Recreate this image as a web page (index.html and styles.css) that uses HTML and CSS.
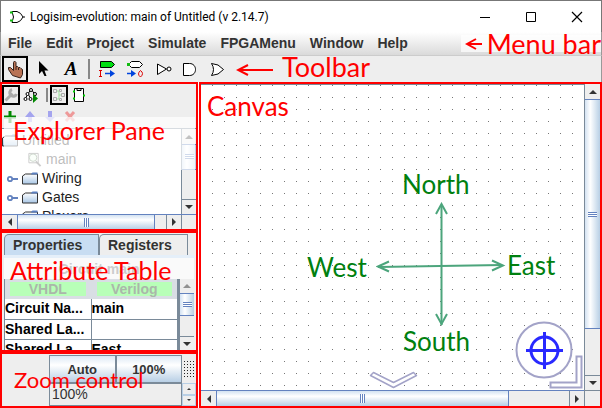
FILE: index.html
```html
<!DOCTYPE html>
<html lang="en">
<head>
<meta charset="utf-8">
<title>Logisim-evolution: main of Untitled (v 2.14.7)</title>
<link rel="stylesheet" href="styles.css">
</head>
<body>
<div class="window">
  <header class="titlebar">
    <svg class="app-icon" viewBox="0 0 16 14"><path d="M2 1.500h5q4 1 6 5.500q-2 4.500-6 5.500h-5q3-5.500 0-11zM13 7h2" fill="#fff" stroke="#000"/><path d="M0 2.500h3M0 10.500h3" stroke="#1b1" stroke-width="2"/></svg>
    <h1 class="title">Logisim-evolution: main of Untitled (v 2.14.7)</h1>
    <div class="window-buttons">
      <button class="plain" aria-label="Minimize"><svg viewBox="0 0 12 12"><path d="M1 6.500h10" stroke="#000"/></svg></button>
      <button class="plain" aria-label="Maximize"><svg viewBox="0 0 12 12"><path d="M1.500 1.500h9v9h-9z" fill="none" stroke="#000"/></svg></button>
      <button class="plain" aria-label="Close"><svg viewBox="0 0 12 12"><path d="M1 1l10 10M11 1L1 11" stroke="#000" stroke-width="1.200"/></svg></button>
    </div>
  </header>

  <nav class="menubar">
    <button class="plain">File</button><button class="plain">Edit</button><button class="plain">Project</button><button class="plain">Simulate</button><button class="plain">FPGAMenu</button><button class="plain">Window</button><button class="plain">Help</button>
    <div class="callout menu-callout"><svg width="18" height="14" viewBox="0 0 18 14"><path d="M17 7H2M11 2L2 7l9 5" fill="none" stroke="red" stroke-width="2"/></svg><span>Menu bar</span></div>
  </nav>

  <div class="toolbar">
    <button class="tool selected" aria-label="Poke tool"><svg viewBox="2 57 26 26"><path d="M12.500 76.500l-4-6v-2h2l3 3v-8l1-1.500 1.500 1.500v4h1.500l1 1h1.500l1 1 1.500 1v5l-2 3.500z" fill="#b97355" stroke="#34211a"/><path d="M16 68v3M18.500 69v2" stroke="#34211a"/></svg></button>
    <button class="tool" aria-label="Edit tool"><svg viewBox="30 57 26 26"><path d="M39 62v13l3-3 2.500 5h2l-2-5.500H48.500z" fill="#000"/></svg></button>
    <button class="tool text-tool" aria-label="Text tool">A</button>
    <span class="separator"></span>
    <button class="tool" aria-label="Add input pin"><svg viewBox="94 57 26 26"><path d="M100.500 62.500h11l3 3-3 3h-11z" fill="#0d1" stroke="#000"/><path d="M99 71.500h3M100.500 71v7M99 77.500h3" stroke="#d00"/><path d="M105 74.500h8" stroke="#04d" stroke-width="1.500"/><path d="M110 71l5 3.500-5 3.500z" fill="#04d"/></svg></button>
    <button class="tool" aria-label="Add output pin"><svg viewBox="122 57 26 26"><path d="M131.500 62.500h8l3 3-3 3h-8l-3-3z" fill="#fff" stroke="#000"/><path d="M127 65.500h3" stroke="#1b1" stroke-width="3"/><path d="M127 74.500h6" stroke="#04d" stroke-width="1.500"/><path d="M131 71l5 3.500-5 3.500z" fill="#04d"/><path d="M140.500 71.500q-4 3.500 0 6.500q4-3.500 0-6.500z" fill="none" stroke="#d00"/></svg></button>
    <button class="tool" aria-label="Add NOT gate"><svg viewBox="150 57 26 26"><path d="M157.500 65v10.500l9-5.500z" fill="#fff" stroke="#000"/><circle cx="169" cy="70" r="2" fill="#fff" stroke="#000"/></svg></button>
    <button class="tool" aria-label="Add AND gate"><svg viewBox="178 57 26 26"><path d="M183.500 64.500h6c8 0 8 12 0 12h-6z" fill="#fff" stroke="#000"/></svg></button>
    <button class="tool" aria-label="Add OR gate"><svg viewBox="206 57 26 26"><path d="M211.500 64.500q7 0 12 6q-5 6-12 6q4-6 0-12z" fill="#fff" stroke="#000"/></svg></button>
    <div class="callout toolbar-callout"><svg width="38" height="14" viewBox="0 0 38 14"><path d="M37 7H2M12 2L2 7l10 5" fill="none" stroke="red" stroke-width="2"/></svg><span>Toolbar</span></div>
  </div>

  <main class="workspace">
    <aside class="sidebar">
      <section class="explorer framed">
        <div class="mini-tools">
          <button class="mini selected" aria-label="Design view"><svg viewBox="0 0 14 14"><path d="M1.500 12.500l7-7" stroke="#aaa" stroke-width="3"/><path d="M8 1.500a3.500 3.500 0 1 0 4.500 4.500" fill="none" stroke="#aaa" stroke-width="3"/></svg></button>
          <button class="mini" aria-label="Simulation view"><svg viewBox="0 0 16 16"><path d="M8 2L2 12M8 2l5 7M5 7l3 5" stroke="#000"/><g fill="#fff" stroke="#000"><circle cx="8" cy="3" r="1.500"/><circle cx="4.500" cy="7" r="1.500"/><circle cx="12" cy="7" r="1.500"/><circle cx="2.500" cy="12" r="1.500"/><circle cx="7.500" cy="12" r="1.500"/></g><path d="M10 7v9l5-4.500z" fill="#080"/></svg></button>
          <span class="separator"></span>
          <button class="mini selected" aria-label="Layout view"><svg viewBox="0 0 14 14"><path d="M4 3h3v4h3M4 11h3V7" fill="none" stroke="#9d9"/><path d="M1.500 1.500h3v3h-3zM1.500 9.500h3v3h-3zM9.500 5.500h3v3h-3zM7.500 1.500h2v2h-2zM7.500 10.500h2v2h-2z" fill="#eee" stroke="#aaa"/></svg></button>
          <button class="mini" aria-label="Appearance view"><svg viewBox="0 0 16 16"><path d="M3.500 1.500h9v13h-9zM6 1.500v2h4v-2" fill="#fff" stroke="#000"/><path d="M2 4.500h2M2 11.500h2M12 8.500h2" stroke="#0c0" stroke-width="2"/></svg></button>
        </div>
        <div class="edit-tools">
          <button class="plain" aria-label="Add circuit"><svg viewBox="0 0 12 12"><path d="M6 0v12M0 6h12" stroke="#080" stroke-width="3"/></svg></button>
          <button class="plain" aria-label="Move up"><svg viewBox="0 0 12 12"><path d="M6 0l5 6H8v5H4V6H1z" fill="#a4a4ee"/></svg></button>
          <button class="plain" aria-label="Move down"><svg viewBox="0 0 12 12"><path d="M6 11L1 6h3V0h4v6h3z" fill="#a4a4ee"/></svg></button>
          <button class="plain" aria-label="Delete circuit"><svg viewBox="0 0 12 12"><path d="M2 1l8 9M10 1l-8 9" stroke="#e99" stroke-width="3"/></svg></button>
        </div>
        <div class="tree-pane">
          <ul class="tree">
            <li><svg class="folder" viewBox="0 0 16 14"><use href="#folder"/></svg>Untitled</li>
            <li class="child"><svg class="folder" viewBox="0 0 16 16"><path d="M2.500 1.500h10v10h-10z" fill="#fff" stroke="#555"/><circle cx="7" cy="6" r="4" fill="#efe" stroke="#575"/><path d="M10 10l5 5" stroke="#555" stroke-width="2"/></svg>main</li>
            <li class="branch"><svg class="handle" viewBox="0 0 11 8"><use href="#handle"/></svg><svg class="folder" viewBox="0 0 16 14"><use href="#folder"/></svg>Wiring</li>
            <li class="branch"><svg class="handle" viewBox="0 0 11 8"><use href="#handle"/></svg><svg class="folder" viewBox="0 0 16 14"><use href="#folder"/></svg>Gates</li>
            <li class="branch"><svg class="handle" viewBox="0 0 11 8"><use href="#handle"/></svg><svg class="folder" viewBox="0 0 16 14"><use href="#folder"/></svg>Plexers</li>
          </ul>
          <div class="scroll vertical tree-v"><i class="cap up"></i><i class="thumb"></i><i class="track"></i><i class="cap down"></i></div>
        </div>
        <div class="scroll horizontal tree-h"><i class="cap left"></i><i class="thumb"></i><i class="track"></i><i class="cap right"></i><i class="corner"></i></div>
        <div class="callout explorer-callout">Explorer Pane</div>
      </section>

      <section class="attributes framed">
        <div class="tabs"><button class="tab active">Properties</button><button class="tab">Registers</button></div>
        <div class="attr-title">Circuit main</div>
        <div class="attr-body">
          <div class="attr-data">
            <div class="languages"><button>VHDL</button><button>Verilog</button></div>
            <table>
              <tr><th>Circuit Na...</th><td>main</td></tr>
              <tr><th>Shared La...</th><td></td></tr>
              <tr><th>Shared La...</th><td>East</td></tr>
            </table>
          </div>
          <div class="scroll vertical attr-v"><i class="cap up"></i><i class="thumb"></i><i class="track"></i><i class="cap down"></i></div>
        </div>
        <div class="callout attribute-callout">Attribute Table</div>
      </section>

      <section class="zoom framed">
        <div class="zoom-grid">
          <button class="zoom-button">Auto</button>
          <button class="zoom-button">100%</button>
          <button class="grid-toggle" aria-label="Show grid"></button>
          <input class="zoom-value" aria-label="Zoom" value="100%">
          <div class="spinner"><button aria-label="Zoom in"><i class="cap up"></i></button><button aria-label="Zoom out"><i class="cap down"></i></button></div>
        </div>
        <div class="callout zoom-callout">Zoom control</div>
      </section>
    </aside>

    <section class="canvas-frame framed">
      <div class="canvas">
        <div class="callout canvas-callout">Canvas</div>
        <svg class="axes" width="130" height="126" viewBox="376 202 130 126"><path d="M441.500 205v120M378 267l124-2" stroke="#4ca57c" stroke-width="2" fill="none"/><path d="M436 214l5.500-10 5.500 10M436 314l5.500 10 5.500-10M389 261.500l-11 5 11 5M492 260.500l11 5-11 5" stroke="#4ca57c" stroke-width="2" fill="none"/></svg>
        <span class="compass north">North</span>
        <span class="compass west">West</span>
        <span class="compass east">East</span>
        <span class="compass south">South</span>
        <svg class="chevron" width="50" height="18" viewBox="368 371 50 18"><path d="M373.500 372.500l20 10 20-10 3 3-23 12-23-12z" fill="#fff" stroke="#a3a3c8" stroke-width="1.500" stroke-linejoin="round"/></svg>
        <svg class="recenter" width="70" height="70" viewBox="514 320 70 70"><path d="M576.500 356.500h5v31h-31v-5h26z" fill="#fff" stroke="#a3a3c8" stroke-width="2"/><circle cx="544" cy="350" r="27.500" fill="#fff" stroke="#a3a3c8" stroke-width="2"/><circle cx="544.500" cy="350.500" r="13.500" fill="none" stroke="#2929ff" stroke-width="3"/><path d="M544.500 332v37M526 350.500h37" stroke="#2929ff" stroke-width="3"/></svg>
      </div>
      <div class="scroll vertical canvas-v"><i class="cap up"></i><i class="thumb"></i><i class="track"></i><i class="cap down"></i></div>
      <div class="scroll horizontal canvas-h"><i class="cap left"></i><i class="thumb"></i><i class="track"></i><i class="cap right"></i></div>
      <i class="corner"></i>
    </section>
  </main>
</div>
<svg class="symbols" aria-hidden="true">
  <defs>
    <linearGradient id="blue" x2="0" y2="1"><stop stop-color="#fff"/><stop offset="1" stop-color="#a9c7e6"/></linearGradient>
    <g id="folder"><path d="M.5 12.500v-8l3-2H15.500v10z" fill="url(#blue)" stroke="#333"/><path d="M9 2.500L10.500 1h5v2H9z" fill="#5a7fc0"/></g>
    <g id="handle"><circle cx="3" cy="4" r="2.200" fill="#fff" stroke="#6382bf" stroke-width="1.800"/><path d="M5 4h6" stroke="#6382bf" stroke-width="2"/></g>
  </defs>
</svg>
</body>
</html>
```
FILE: styles.css
```css
* { box-sizing: border-box; }
body { margin: 0; font: 14px/19px "Liberation Sans", Arial, sans-serif; color: #333; }
button { font: inherit; color: inherit; padding: 0; margin: 0; border: 0; background: none; }
svg { display: block; }
.symbols { position: absolute; width: 0; height: 0; }

.window { display: flex; flex-direction: column; height: 100vh; background: #eee; overflow: hidden; }

.titlebar { display: flex; align-items: center; height: 32px; padding: 0 18px 0 9px; background: #fff; border: 1px solid #777; border-bottom: 0; }
.app-icon { width: 16px; height: 14px; }
.title { flex: 1; margin: 0 0 0 4px; font: 12px/18px Roboto, "Open Sans", sans-serif; color: #000; }
.window-buttons { display: flex; gap: 34px; }
.window-buttons svg { width: 12px; height: 12px; }

.menubar { position: relative; display: flex; align-items: center; gap: 14px; height: 24px; padding: 0 7px; font-weight: bold; background: linear-gradient(#fff, #dadada); border: 1px solid #999; border-top: 0; border-bottom-color: #ccc; }

.toolbar { position: relative; display: flex; align-items: center; gap: 2px; height: 26px; padding: 0 1px; border-left: 1px solid #999; border-right: 1px solid #999; }
.tool { width: 26px; height: 26px; }
.tool svg { width: 26px; height: 26px; }
.tool.selected { border: 2px solid #000; }
.tool.selected svg { margin: -2px; }
.text-tool { font: italic bold 19px/26px "Liberation Serif", serif; color: #000; }
.separator { width: 2px; height: 20px; margin: 0 2px; background: #888; }

.workspace { flex: 1; display: grid; grid-template-columns: 198px 1fr; gap: 1px; min-height: 0; background: #fff; }
.sidebar { display: grid; grid-template-rows: 149fr 121fr 56fr; min-height: 0; background: #eee; }
.framed { position: relative; border: 2px solid red; overflow: hidden; min-width: 0; min-height: 0; }

.callout { position: absolute; font: 25px/30px Lato, sans-serif; color: red; white-space: nowrap; }
.menu-callout { display: flex; align-items: center; gap: 4px; right: 0; top: 3px; height: 17px; padding-left: 4px; font-size: 27px; background: rgba(255,255,255,.7); }
.toolbar-callout { display: flex; align-items: center; gap: 8px; left: 235px; top: -4px; font-size: 27px; }
.toolbar-callout svg { margin-top: 5px; }
.explorer-callout { left: 2px; right: 1px; top: 33px; height: 53px; padding: 0 9px; line-height: 26px; background: rgba(255,255,255,.7); }
.attribute-callout { left: 8px; top: 22px; }
.zoom-callout { left: 12px; top: 11px; font-size: 22px; }
.canvas-callout { left: 6px; top: 6px; font-size: 26px; }

.mini-tools { display: flex; align-items: center; gap: 2px; height: 22px; }
.mini { display: grid; place-items: center; width: 18px; height: 20px; }
.mini.selected { border: 2px solid #000; }
.mini svg { width: 16px; height: 16px; }
.mini.selected svg { width: 14px; height: 14px; }
.mini-tools .separator { height: 14px; margin: 0 0 0 4px; }
.edit-tools { display: flex; align-items: center; gap: 8px; height: 22px; padding: 2px; }
.edit-tools svg { width: 12px; height: 12px; }

.explorer, .attributes { display: flex; flex-direction: column; }
.tree-pane { flex: 1; display: grid; grid-template-columns: 1fr 15px; min-height: 0; border-top: 1px solid #7a8a99; }
.tree { margin: 0; padding: 2px 0 0; list-style: none; overflow: hidden; background: #fff; color: #222; }
.tree li { display: flex; align-items: center; gap: 4px; height: 19px; }
.tree .folder { width: 16px; height: 15px; }
.tree .child { padding-left: 24px; }
.tree .branch { padding-left: 5px; }
.tree .handle { width: 11px; height: 8px; }

.scroll { display: flex; background: #eee; }
.vertical { flex-direction: column; border-left: 1px solid #7a8a99; }
.horizontal { border-top: 1px solid #6382bf; }
.cap { display: grid; place-items: center; flex: 0 0 15px; }
.cap::before { content: ""; border: 4px solid transparent; }
.up::before { border-top: 0; border-bottom-color: #333; }
.down::before { border-bottom: 0; border-top-color: #333; }
.left::before { border-left: 0; border-right-color: #333; }
.right::before { border-right: 0; border-left-color: #333; }
.right { border-left: 1px solid #7a8a99; }
.down { border-top: 1px solid #7a8a99; }
.thumb { display: grid; place-items: center; border: 1px solid #6382bf; }
.vertical .thumb { background: linear-gradient(90deg, #d3e2f2, #fff 35%, #b8cfe5); border-width: 1px 0; }
.horizontal .thumb { background: linear-gradient(#d3e2f2, #fff 35%, #b8cfe5); border-width: 0 1px; }
.thumb::before { content: ""; }
.vertical .thumb::before { width: 9px; height: 5px; background: repeating-linear-gradient(#6382bf 0 1px, #fff 1px 2px); }
.horizontal .thumb::before { width: 5px; height: 9px; background: repeating-linear-gradient(90deg, #6382bf 0 1px, #fff 1px 2px); }
.tree-v .thumb { flex: 24; }
.tree-v .track { flex: 30; }
.tree-h { flex: 0 0 15px; }
.tree-h .thumb { flex: 137; }
.tree-h .track { flex: 11; }
.tree-h .corner { width: 15px; border-left: 1px solid #7a8a99; }

.tabs { display: flex; height: 22px; padding: 1px 2px 0; }
.tab { flex: 0 0 89px; padding-left: 8px; text-align: left; font-weight: bold; border: 1px solid #7a8a99; border-bottom: 0; border-top-left-radius: 5px; }
.tab.active { flex-basis: 95px; background: #c8ddf2; }
.attr-title { height: 24px; margin: 0 2px; border-top: 3px solid #e5eff9; padding-top: 2px; background: #fafafa; text-align: center; font-weight: bold; color: #ccc; }
.attr-body { flex: 1; display: grid; grid-template-columns: 1fr 15px; min-height: 0; padding: 0 2px; }
.attr-data { overflow: hidden; background: #fff; border-left: 1px solid #7a8a99; border-right: 2px solid #7a8a99; }
.languages { display: grid; grid-template-columns: 1fr 1fr; gap: 11px; height: 20px; padding: 3px 5px; background: #d9dee4; font-weight: bold; line-height: 14px; color: #aab7aa; }
.languages button { background: #b8ffb8; }
.attributes table { width: 100%; table-layout: fixed; border-collapse: collapse; font-weight: bold; color: #000; }
.attributes th, .attributes td { height: 20px; padding: 0; text-align: left; white-space: nowrap; border-bottom: 1px solid #7a8a99; }
.attributes td { border-left: 1px solid #7a8a99; }
.attr-v .cap { flex-basis: 14px; }
.attr-v .up { opacity: .5; }
.attr-v .thumb { flex: 22; }
.attr-v .track { flex: 20; }

.zoom { padding: 1px 0 0 47px; }
.zoom-grid { display: grid; grid-template: 28px 23px / 1fr 1fr 14px; height: 100%; }
.zoom-button { font-size: 13px; font-weight: bold; border: 1px solid #7a8a99; background: linear-gradient(#dce8f4, #fff 35%, #b8cfe5); }
.grid-toggle { margin: 6px 0 6px 2px; background: conic-gradient(at 1px 1px, transparent 75%, #222 0) 0 0 / 3px 3px; }
.zoom-value { grid-column: span 2; min-width: 0; padding: 0 2px; border: 1px solid #7a8a99; font: inherit; color: #333; background: #eee; }
.spinner { display: grid; grid-template-rows: 1fr 1fr; }
.spinner button { display: grid; place-items: center; border: 1px solid #b8cfe5; }
.spinner .cap { border: 0; }
.spinner .cap::before { border-width: 2px; }

.canvas-frame { display: grid; grid-template: 1fr 16px / 1fr 16px; background: #eee; }
.canvas { position: relative; overflow: hidden; border-top: 1px solid #7a8a99; background: conic-gradient(at 1px 1px, transparent 75%, #777 0) 11px 0 / 12px 12px #fff; }
.canvas-v .thumb { flex: 229; }
.canvas-v .track { flex: 46; }
.canvas-h .thumb { flex: 293; }
.canvas-h .track { flex: 60; }
.canvas-frame .corner { border-top: 1px solid #7a8a99; border-left: 1px solid #7a8a99; }
.axes { position: absolute; left: 175px; top: 117px; }
.compass { position: absolute; font: 26px/30px Lato, sans-serif; color: #00800f; }
.north { left: 201px; top: 84px; }
.west { left: 106px; top: 167px; }
.east { left: 306px; top: 165px; }
.south { left: 202px; top: 241px; }
.chevron { position: absolute; left: 167px; bottom: 1px; }
.recenter { position: absolute; right: 0; bottom: 0; }
```
